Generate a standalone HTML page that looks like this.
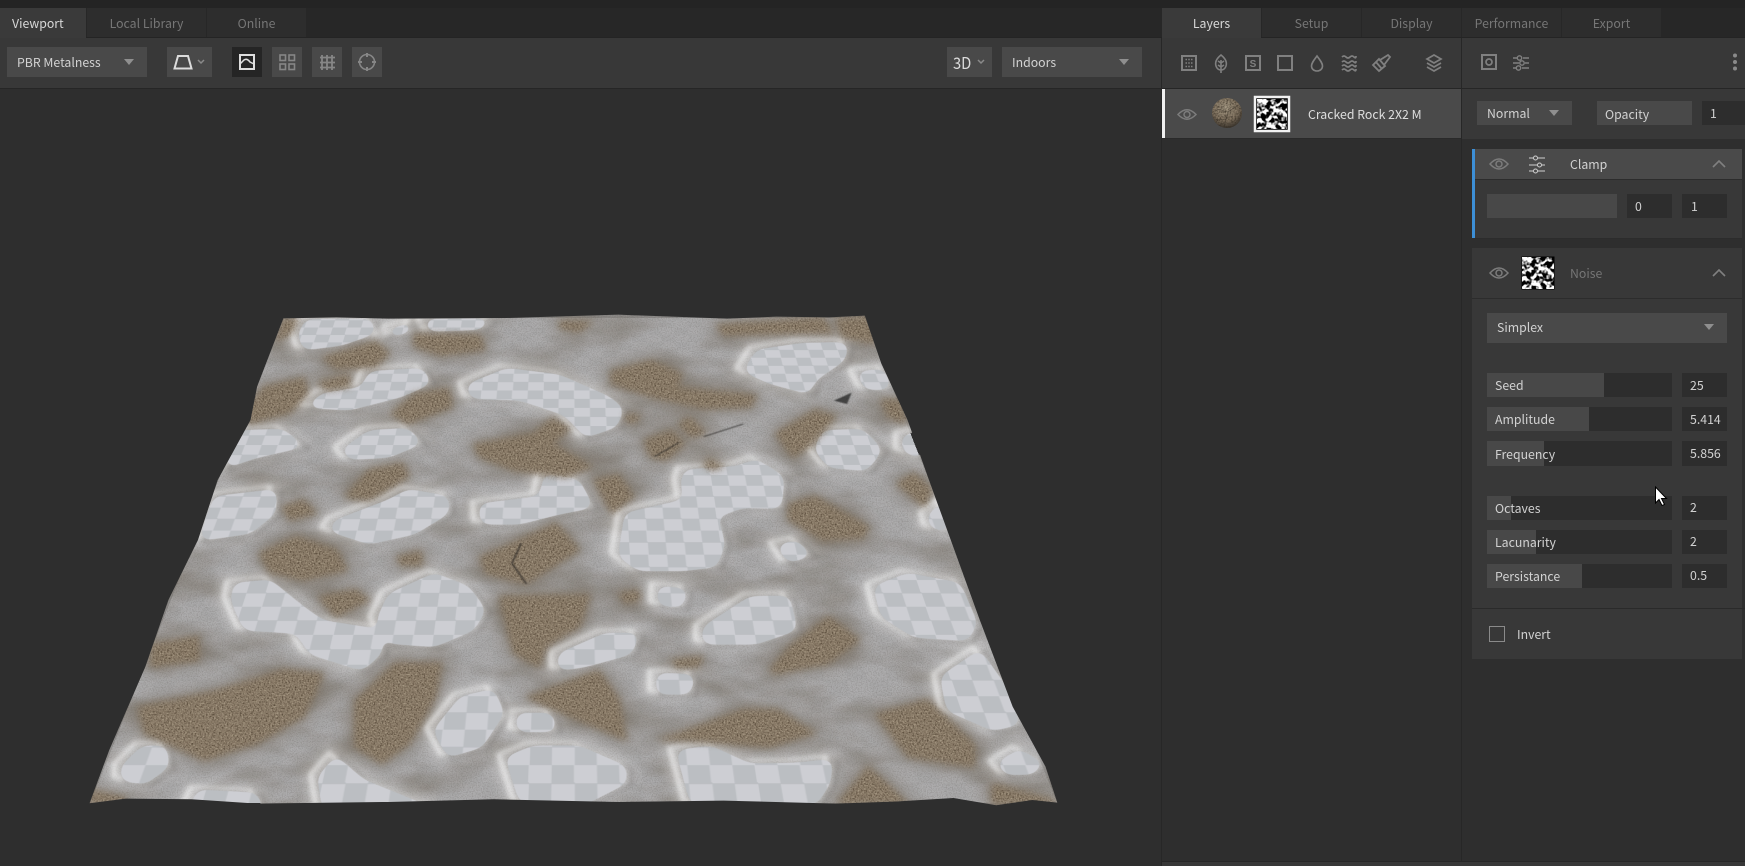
<!DOCTYPE html>
<html><head><meta charset="utf-8"><style>
html,body{margin:0;padding:0;background:#2e2e2e}
#r{position:relative;width:1745px;height:866px;overflow:hidden;background:#2e2e2e;font-family:"Noto Sans CJK JP","Liberation Sans",sans-serif;font-size:12.3px;color:#d2d2d2}
.a{position:absolute}
.t{position:absolute;white-space:nowrap;line-height:16px;height:16px}
.tab{position:absolute;top:8px;height:29px;line-height:30px;text-align:center;background:#2d2d2d;color:#767676}
.l{background:#494949}.d{background:#2d2d2d}.f{background:#484848}
svg{position:absolute;left:0;top:0}
#ch{position:absolute;left:0;top:0;width:967px;height:806px;transform-origin:0 0;transform:matrix3d(1,0,0,0,-0.4711,0.3406,0,-0.000821,0,0,1,0,470.07,528.6,0,1.662);background:repeating-conic-gradient(#cdced3 0 25%,#bbbec2 0 50%) 41.5px 26px/46.6px 39px}
</style></head><body><div id="r">
<div class="a" style="left:0;top:0;width:1745px;height:38px;background:#272727"></div>
<div class="a" style="left:0;top:0;width:1745px;height:8px;background:#242424"></div>
<div class="a" style="left:0;top:38px;width:1745px;height:50px;background:#383838"></div>
<div class="a" style="left:0;top:88px;width:1745px;height:1px;background:#262626"></div>
<div class="a" style="left:0;top:37px;width:1745px;height:1px;background:#242424"></div>

<div id="ch"></div>
<svg width="1745" height="866" viewBox="0 0 1745 866">
<defs>
<filter id="sm" filterUnits="userSpaceOnUse" x="0" y="0" width="1745" height="866" color-interpolation-filters="sRGB"><feGaussianBlur stdDeviation="4.500"/><feComponentTransfer><feFuncA type="linear" slope="9" intercept="-3.7"/></feComponentTransfer><feGaussianBlur stdDeviation="3.500"/><feComponentTransfer><feFuncA type="linear" slope="9" intercept="-3.8"/></feComponentTransfer></filter>
<filter id="bl2" filterUnits="userSpaceOnUse" x="0" y="0" width="1745" height="866" color-interpolation-filters="sRGB"><feGaussianBlur stdDeviation="2.500"/></filter>
<filter id="bl3" filterUnits="userSpaceOnUse" x="0" y="0" width="1745" height="866" color-interpolation-filters="sRGB"><feGaussianBlur stdDeviation="7"/></filter>
<filter id="bl9" filterUnits="userSpaceOnUse" x="0" y="0" width="1745" height="866" color-interpolation-filters="sRGB"><feGaussianBlur stdDeviation="9"/></filter>
<filter id="bl1" filterUnits="userSpaceOnUse" x="0" y="0" width="1745" height="866" color-interpolation-filters="sRGB"><feGaussianBlur stdDeviation="1.200"/></filter>
<filter id="snow" filterUnits="userSpaceOnUse" x="0" y="280" width="1160" height="560" color-interpolation-filters="sRGB">
<feTurbulence type="fractalNoise" baseFrequency=".8" numOctaves="2" seed="5"/><feColorMatrix type="matrix" values="0 0 0 0 .35 0 0 0 0 .33 0 0 0 0 .31 .8 0 0 0 -.32"/><feComposite in2="SourceAlpha" operator="in" result="g"/>
<feTurbulence type="fractalNoise" baseFrequency=".014 .03" numOctaves="3" seed="11"/><feColorMatrix type="matrix" values="0 0 0 0 .48 0 0 0 0 .45 0 0 0 0 .41 1.600 0 0 0 -.66"/><feComposite in2="SourceAlpha" operator="in" result="m"/>
<feMerge><feMergeNode in="SourceGraphic"/><feMergeNode in="m"/><feMergeNode in="g"/></feMerge></filter>
<filter id="rock" filterUnits="userSpaceOnUse" x="0" y="280" width="1160" height="560" color-interpolation-filters="sRGB">
<feGaussianBlur in="SourceGraphic" stdDeviation="3.500" result="b"/>
<feTurbulence type="fractalNoise" baseFrequency=".62" numOctaves="3" seed="3" result="n"/>
<feColorMatrix in="n" type="matrix" values="0 0 0 0 .28 0 0 0 0 .23 0 0 0 0 .17 2 0 0 0 -.88" result="dk"/><feComposite in="dk" in2="b" operator="in" result="dk2"/>
<feColorMatrix in="n" type="matrix" values="0 0 0 0 .74 0 0 0 0 .69 0 0 0 0 .6 0 1.800 0 0 -.85" result="lt"/><feComposite in="lt" in2="b" operator="in" result="lt2"/>
<feMerge><feMergeNode in="b"/><feMergeNode in="dk2"/><feMergeNode in="lt2"/></feMerge></filter>
<filter id="nz" x="0" y="0" width="100%" height="100%" color-interpolation-filters="sRGB"><feTurbulence type="fractalNoise" baseFrequency=".2" numOctaves="2" seed="8"/><feColorMatrix type="matrix" values="6 0 0 0 -2.500 6 0 0 0 -2.500 6 0 0 0 -2.500 0 0 0 0 1"/></filter>
<filter id="spn" x="0" y="0" width="100%" height="100%" color-interpolation-filters="sRGB"><feTurbulence type="fractalNoise" baseFrequency=".6" numOctaves="2" seed="4"/><feColorMatrix type="matrix" values="0 0 0 0 .2 0 0 0 0 .17 0 0 0 0 .13 1.800 0 0 0 -.7"/></filter>
<radialGradient id="sp" cx=".45" cy=".32" r=".72"><stop offset="0" stop-color="#a59984"/><stop offset=".6" stop-color="#80725f"/><stop offset="1" stop-color="#2f2a24"/></radialGradient>
<clipPath id="spc"><circle cx="1227" cy="113" r="15"/></clipPath>
<g id="b" transform="translate(60,300) scale(.657,.3333)">
<polygon points="375,58 475,58 480,100 430,135 370,150 362,100"/>
<polygon points="490,115 505,85 540,65 532,98"/>
<polygon points="555,58 660,56 640,88 560,94"/>
<polygon points="1060,150 1130,130 1200,128 1195,180 1150,240 1140,282 1080,250 1040,215"/>
<polygon points="1212,215 1255,208 1265,268 1225,268"/>
<polygon points="470,215 552,205 566,250 520,290 440,330 372,322 400,280 460,262"/>
<polygon points="618,255 680,205 760,225 835,290 858,325 848,380 800,412 768,345 700,300 625,295"/>
<polygon points="272,392 340,388 372,440 300,472 250,505 262,430"/>
<polygon points="470,392 530,385 552,430 500,472 440,478 428,450"/>
<polygon points="1160,392 1222,388 1252,450 1228,512 1170,502 1148,450"/>
<polygon points="1282,405 1318,392 1312,475 1282,455"/>
<polygon points="950,510 1030,500 1060,478 1102,530 1098,625 1040,622 1000,650 1012,730 1000,800 950,812 880,812 850,770 860,640 950,600 945,545"/>
<polygon points="235,590 330,568 328,640 290,700 212,722 225,640"/>
<polygon points="418,662 500,600 530,568 592,590 592,640 540,702 470,732 408,692"/>
<polygon points="638,612 730,590 738,520 790,540 812,622 760,642 700,672 640,672"/>
<polygon points="1320,645 1345,605 1355,695 1325,685"/>
<polygon points="1090,735 1122,722 1145,768 1108,788"/>
<polygon points="265,850 320,840 370,920 400,962 490,990 490,1060 460,1112 380,1062 360,1000 280,990 260,900"/>
<polygon points="500,882 570,820 622,860 648,930 630,990 570,1040 500,1030 482,960"/>
<polygon points="1238,860 1290,820 1370,850 1396,970 1382,1022 1300,1012 1250,950"/>
<polygon points="978,982 1050,890 1110,888 1122,990 1060,1032 978,1032"/>
<polygon points="758,1062 830,1000 882,1000 870,1062 800,1100 758,1112"/>
<polygon points="1340,1130 1400,1050 1440,1160 1462,1272 1420,1292 1350,1232"/>
<polygon points="910,858 955,868 948,922 910,916"/>
<polygon points="908,1120 966,1124 960,1182 908,1182"/>
<polygon points="568,1292 610,1190 660,1168 676,1240 642,1342 590,1372"/>
<polygon points="93,1400 125,1338 162,1338 166,1400 130,1452 93,1442"/>
<polygon points="678,1372 720,1338 790,1338 862,1400 862,1450 800,1512 700,1508"/>
<polygon points="938,1352 990,1338 1050,1392 1120,1390 1176,1378 1172,1450 1152,1512 960,1512"/>
<polygon points="392,1432 420,1368 462,1440 575,1530 400,1530"/>
<polygon points="695,1240 750,1240 755,1295 695,1295"/>
<polygon points="1425,1390 1460,1348 1497,1390 1482,1422 1440,1424"/>
<polygon points="195,1530 210,1470 300,1480 310,1530"/>
</g>
<g id="st" transform="translate(60,300) scale(.657,.3333)">
<polygon points="538,100 640,105 648,150 580,167 538,140"/>
<polygon points="398,172 480,123 502,160 480,202 420,207"/>
<polygon points="760,62 812,65 790,96 760,86"/>
<polygon points="998,75 1160,52 1178,100 1110,100 1010,106"/>
<polygon points="1180,55 1232,48 1242,132 1190,112"/>
<polygon points="838,212 900,180 948,222 940,262 1062,285 1052,322 980,327 900,292 838,252"/>
<polygon points="286,320 310,260 372,232 378,280 350,340 286,372"/>
<polygon points="392,245 440,224 442,260 405,272"/>
<polygon points="502,342 540,280 592,264 598,322 530,372"/>
<polygon points="338,55 364,55 352,100 328,128"/>
<polygon points="628,432 720,400 750,352 778,385 750,430 812,500 770,532 690,512 638,472"/>
<polygon points="888,420 930,390 952,430 922,482 898,472"/>
<polygon points="1088,400 1150,328 1182,350 1142,440 1115,472"/>
<polygon points="1248,298 1282,298 1288,372 1260,352"/>
<polygon points="432,592 470,508 522,488 532,530 470,602"/>
<polygon points="336,622 370,598 392,640 350,662"/>
<polygon points="812,540 850,522 874,590 840,642"/>
<polygon points="1272,550 1300,518 1328,570 1316,622"/>
<polygon points="1108,610 1150,588 1232,680 1222,717 1160,722 1108,660"/>
<polygon points="302,760 360,708 422,750 438,812 370,842 318,817"/>
<polygon points="638,772 720,700 755,668 792,750 710,852 648,822"/>
<polygon points="512,770 550,752 552,797 518,797"/>
<polygon points="668,888 808,882 792,980 740,1040 730,1102 690,1062"/>
<polygon points="392,890 450,868 472,900 420,952"/>
<polygon points="1078,1112 1110,1040 1170,948 1218,1020 1170,1092 1090,1122"/>
<polygon points="848,880 882,868 882,902 860,912"/>
<polygon points="138,1032 212,1008 212,1082 138,1102"/>
<polygon points="118,1222 240,1170 340,1108 402,1120 372,1250 300,1332 220,1382 128,1302"/>
<polygon points="448,1202 510,1088 582,1088 572,1190 532,1332 490,1392 448,1342"/>
<polygon points="708,1192 820,1110 852,1200 862,1322 790,1262"/>
<polygon points="1240,1242 1320,1198 1392,1332 1392,1402 1290,1372"/>
<polygon points="908,1322 1040,1228 1092,1228 1152,1300 1080,1342 950,1322"/>
<polygon points="1182,1512 1230,1398 1292,1512"/>
<polygon points="48,1470 100,1492 100,1512 44,1512"/>
<polygon points="1418,1450 1512,1498 1518,1512 1418,1512"/>
<polygon points="928,1080 980,1068 972,1102 940,1105"/>
<polygon points="958,350 985,400 960,412 940,370"/>
<polygon points="988,475 1012,500 992,512 978,495"/>
<polygon points="860,340 885,345 875,370 860,365"/>
</g>
<mask id="hm" maskUnits="userSpaceOnUse" x="0" y="0" width="1745" height="866"><rect width="1745" height="866" fill="#fff"/><use href="#b" fill="#000" filter="url(#sm)"/></mask>
</defs>

<g mask="url(#hm)">
<rect x="70" y="300" width="1010" height="515" fill="#a6a5a5" fill-opacity=".82" filter="url(#snow)"/>
<use href="#st" fill="#6e6252" stroke="#6e6252" stroke-width="18" opacity=".55" filter="url(#bl9)"/>
<use href="#b" fill="none" stroke="#fff" stroke-width="24" transform="translate(-4,-2)" opacity=".42" filter="url(#bl3)"/>
<use href="#b" fill="none" stroke="#fff" stroke-width="7" transform="translate(-7,-3)" opacity=".6" filter="url(#bl2)"/>
<use href="#b" fill="none" stroke="#55514e" stroke-width="8" transform="translate(5,2)" opacity=".25" filter="url(#bl2)"/>
</g>
<use href="#st" fill="#8a7b68" filter="url(#rock)"/>
<g transform="translate(60,300) scale(.657,.3333)" filter="url(#bl1)" opacity=".7">
<polygon points="1252,1242 1318,1198 1348,1240 1288,1335 1270,1300" fill="#2f2d2b"/>
<polygon points="1178,302 1205,278 1198,312" fill="#181818"/>
<g fill="none" stroke="#1f1d1b" stroke-width="2.500">
<path d="M980 410L1040 372"/><path d="M702 730L688 790 710 852"/><path d="M420 952L455 920"/>
<path d="M220 1202L252 1168"/><path d="M905 470L942 428"/><path d="M1016 1245L1055 1202"/><path d="M528 1095L580 1095"/><path d="M1078 1120L1085 1080"/>
<path d="M678 1058L740 1058"/><path d="M850 1305L760 1235"/>
</g>
<path d="M870 1335Q960 1290 1040 1232" fill="none" stroke="#57524c" stroke-width="3"/>
<path d="M1422 1512L1432 1450 1450 1500Z" fill="#1c1b1a"/>
</g>
<path fill="#2e2e2e" fill-rule="evenodd" transform="translate(60,300) scale(.657,.3333)" d="M-90 -60H1670V1640H-90ZM340 55L420 52 500 56 680 54 850 44 1015 56 1090 50 1170 52 1225 47 1250 190 1290 360 1330 580 1400 960 1450 1220 1500 1400 1518 1508 1480 1500 1425 1516 1360 1494 1270 1505 1180 1511 1010 1502 850 1506 660 1498 500 1506 300 1511 200 1498 100 1496 45 1510 75 1350 130 1100 165 900 210 720 240 540 290 360 300 260Z"/>
</svg>

<!-- tabs -->
<div class="tab" style="left:0;width:86px;background:#3a3a3a;color:#d8d8d8;height:30px;text-align:left;text-indent:12px">Viewport</div>
<div class="tab" style="left:87px;width:119px">Local Library</div>
<div class="tab" style="left:207px;width:99px">Online</div>
<div class="a" style="left:1162px;top:38px;width:583px;height:50px;background:#383838"></div>
<div class="tab" style="left:1162px;width:99px;background:#3a3a3a;color:#d8d8d8;height:30px">Layers</div>
<div class="tab" style="left:1262px;width:99px">Setup</div>
<div class="tab" style="left:1362px;width:99px;">Display</div>
<div class="tab" style="left:1462px;width:99px">Performance</div>
<div class="tab" style="left:1562px;width:99px">Export</div>

<!-- viewport toolbar -->
<div class="a l" style="left:7px;top:47px;width:140px;height:30px"></div>
<div class="t" style="left:17px;top:54px">PBR Metalness</div>
<div class="a l" style="left:167px;top:47px;width:45px;height:30px"></div>
<div class="a" style="left:232px;top:47px;width:30px;height:30px;background:#252525"></div>
<div class="a l" style="left:272px;top:47px;width:30px;height:30px"></div>
<div class="a l" style="left:312px;top:47px;width:30px;height:30px"></div>
<div class="a l" style="left:352px;top:47px;width:30px;height:30px"></div>
<div class="a l" style="left:947px;top:47px;width:45px;height:30px"></div>
<div class="t" style="left:953px;top:53px;font-size:16px;line-height:18px;height:18px;color:#dcdcdc;transform:scaleX(.92);transform-origin:0 0">3D</div>
<div class="a l" style="left:1002px;top:47px;width:140px;height:30px"></div>
<div class="t" style="left:1012px;top:54px">Indoors</div>

<!-- columns -->
<div class="a" style="left:1161px;top:38px;width:1px;height:828px;background:#272727"></div>
<div class="a" style="left:1461px;top:38px;width:1px;height:828px;background:#272727"></div>
<div class="a" style="left:1162px;top:88px;width:583px;height:1px;background:#262626"></div>
<div class="a" style="left:1162px;top:862px;width:583px;height:4px;background:#383838"></div>
<div class="a" style="left:1162px;top:861px;width:583px;height:1px;background:#272727"></div>

<!-- layer row -->
<div class="a" style="left:1162px;top:89px;width:299px;height:49px;background:#4a4a4a"></div>
<div class="a" style="left:1162px;top:89px;width:3px;height:49px;background:#f0f0f0"></div>
<div class="a" style="left:1162px;top:138px;width:299px;height:1px;background:#2a2a2a"></div>
<div class="t" style="left:1308px;top:106px;color:#dedede">Cracked Rock 2X2 M</div>

<!-- right panel -->
<div class="a" style="left:1462px;top:89px;width:283px;height:50px;background:#383838"></div>
<div class="a l" style="left:1477px;top:101px;width:95px;height:24px"></div>
<div class="t" style="left:1487px;top:105px">Normal</div>
<div class="a l" style="left:1597px;top:101px;width:95px;height:24px"></div>
<div class="t" style="left:1605px;top:106px">Opacity</div>
<div class="a d" style="left:1702px;top:101px;width:43px;height:24px"></div>
<div class="t" style="left:1710px;top:105px">1</div>

<!-- clamp -->
<div class="a" style="left:1472px;top:149px;width:270px;height:89px;background:#383838"></div>
<div class="a" style="left:1475px;top:149px;width:267px;height:30px;background:#4a4a4a"></div>
<div class="a" style="left:1475px;top:179px;width:267px;height:1px;background:#2c2c2c"></div>
<div class="a" style="left:1475px;top:238px;width:267px;height:1px;background:#2c2c2c"></div>
<div class="a" style="left:1472px;top:149px;width:3px;height:89px;background:#3d8fd6"></div>
<div class="t" style="left:1570px;top:156px">Clamp</div>
<div class="a f" style="left:1487px;top:194px;width:130px;height:24px"></div>
<div class="a d" style="left:1627px;top:194px;width:45px;height:24px"></div>
<div class="t" style="left:1635px;top:198px">0</div>
<div class="a d" style="left:1682px;top:194px;width:45px;height:24px"></div>
<div class="t" style="left:1691px;top:198px">1</div>

<!-- noise -->
<div class="a" style="left:1472px;top:248px;width:270px;height:411px;background:#383838"></div>
<div class="a" style="left:1472px;top:298px;width:270px;height:1px;background:#2c2c2c"></div>
<div class="t" style="left:1570px;top:265px;color:#757575">Noise</div>
<div class="a l" style="left:1487px;top:313px;width:240px;height:30px"></div>
<div class="t" style="left:1497px;top:319px">Simplex</div>

<div class="a d" style="left:1487px;top:373px;width:185px;height:24px"></div><div class="a f" style="left:1487px;top:373px;width:117px;height:24px"></div>
<div class="t" style="left:1495px;top:377px">Seed</div>
<div class="a d" style="left:1682px;top:373px;width:45px;height:24px"></div><div class="t" style="left:1690px;top:377px">25</div>

<div class="a d" style="left:1487px;top:407px;width:185px;height:24px"></div><div class="a f" style="left:1487px;top:407px;width:102px;height:24px"></div>
<div class="t" style="left:1495px;top:411px">Amplitude</div>
<div class="a d" style="left:1682px;top:407px;width:45px;height:24px"></div><div class="t" style="left:1690px;top:411px">5.414</div>

<div class="a d" style="left:1487px;top:441px;width:185px;height:25px"></div><div class="a f" style="left:1487px;top:441px;width:57px;height:25px"></div>
<div class="t" style="left:1495px;top:446px">Frequency</div>
<div class="a d" style="left:1682px;top:441px;width:45px;height:25px"></div><div class="t" style="left:1690px;top:445px">5.856</div>

<div class="a d" style="left:1487px;top:496px;width:185px;height:24px"></div><div class="a f" style="left:1487px;top:496px;width:24px;height:24px"></div>
<div class="t" style="left:1495px;top:500px">Octaves</div>
<div class="a d" style="left:1682px;top:496px;width:45px;height:24px"></div><div class="t" style="left:1690px;top:499px">2</div>

<div class="a d" style="left:1487px;top:530px;width:185px;height:24px"></div><div class="a f" style="left:1487px;top:530px;width:49px;height:24px"></div>
<div class="t" style="left:1495px;top:534px">Lacunarity</div>
<div class="a d" style="left:1682px;top:530px;width:45px;height:24px"></div><div class="t" style="left:1690px;top:533px">2</div>

<div class="a d" style="left:1487px;top:564px;width:185px;height:24px"></div><div class="a f" style="left:1487px;top:564px;width:95px;height:24px"></div>
<div class="t" style="left:1495px;top:568px">Persistance</div>
<div class="a d" style="left:1682px;top:564px;width:45px;height:24px"></div><div class="t" style="left:1690px;top:567px">0.5</div>

<div class="a" style="left:1472px;top:608px;width:273px;height:1px;background:#2a2a2a"></div>
<div class="a" style="left:1489px;top:626px;width:14px;height:14px;border:1px solid #8a8a8a"></div>
<div class="t" style="left:1517px;top:626px">Invert</div>

<!-- icons -->
<svg width="1745" height="866" viewBox="0 0 1745 866" fill="none">
<g fill="#8f8f8f" stroke="none">
<path d="M124 59H134L129 65Z"/><path d="M1119 59H1129L1124 65Z"/><path d="M1549 110H1559L1554 116Z"/><path d="M1704 324H1714L1709 330Z"/>
</g>
<path d="M174.500 68.500L178 56H188L191.500 68.500Z" stroke="#dcdcdc" stroke-width="2"/>
<path d="M198 60L201 63 204 60" stroke="#8a8a8a" stroke-width="1.500"/>
<path d="M978 60L981 63 984 60" stroke="#8a8a8a" stroke-width="1.500"/>
<rect x="240" y="55" width="14" height="14" stroke="#dedede" stroke-width="2"/>
<path d="M240 64L244 60Q247 58 250 62L254 64" stroke="#dedede" stroke-width="1.500"/>
<g stroke="#868686" stroke-width="1.600">
<rect x="280" y="55" width="5.500" height="5.500"/><rect x="289" y="55" width="5.500" height="5.500"/><rect x="280" y="64" width="5.500" height="5.500"/><rect x="289" y="64" width="5.500" height="5.500"/>
<path d="M322 55V70M327 55V70M332 55V70M320 57.500H335M320 62.500H335M320 67.500H335" stroke-width="1.800"/>
<circle cx="367" cy="62" r="7.500"/><path d="M367 53V57M367 67V71M358 62H362M372 62H376" stroke-width="2"/>
</g>
<g stroke="#808080" stroke-width="2">
<rect x="1182" y="56" width="14" height="14"/><path d="M1185.500 59.500h7M1185.500 63h7M1185.500 66.500h7" stroke-dasharray="1.500 1.250" stroke-width="1.500"/>
<path d="M1221 55C1226 59 1227 63 1226 66 1225 69 1223 70 1221 70 1219 70 1217 69 1216 66 1215 63 1216 59 1221 55ZM1221 60V73M1221 63L1224 61M1221 63L1218 61M1221 67L1224 65M1221 67L1218 65" stroke-width="1.600"/>
<rect x="1246" y="56" width="14" height="14"/>
<rect x="1278" y="56" width="14" height="14"/>
<path d="M1317 56C1320 60 1322.500 63 1322.500 66 1322.500 69 1320 71 1317 71 1314 71 1311.500 69 1311.500 66 1311.500 63 1314 60 1317 56Z" stroke-width="1.600"/>
<path d="M1342 57Q1344 55 1346 57T1350 57 1354 57 1356 56M1342 62Q1344 60 1346 62T1350 62 1354 62 1356 61M1342 66Q1344 64 1346 66T1350 66 1354 66 1356 65M1342 70Q1344 68 1346 70T1350 70 1354 70 1356 69" stroke-width="1.700"/>
<path d="M1373 65L1379 59 1385 66 1379 71ZM1380 60L1388 55 1390 57 1384 65M1376 62L1382 69" stroke-width="1.800"/>
<path d="M1434 55L1441 59 1434 63 1427 59ZM1427 63L1434 67 1441 63M1427 67L1434 71 1441 67" stroke-width="1.700"/>
<rect x="1482" y="55" width="14" height="14"/><circle cx="1489" cy="62" r="3" stroke-width="1.700"/>
<path d="M1513 58H1517M1523 58H1529M1513 63H1519M1525 63H1529M1513 68H1516M1522 68H1529" stroke-width="1.500"/>
<circle cx="1519.500" cy="58" r="2.200" stroke-width="1.400"/><circle cx="1522" cy="63" r="2.200" stroke-width="1.400"/><circle cx="1518.500" cy="68" r="2.200" stroke-width="1.400"/>
</g>
<text x="1253" y="67" fill="#808080" font-family="Liberation Sans" font-weight="700" font-size="10" text-anchor="middle">S</text>
<g fill="#8a8a8a"><circle cx="1735" cy="55.500" r="2"/><circle cx="1735" cy="62" r="2"/><circle cx="1735" cy="68.500" r="2"/></g>
<g stroke="#7c7c7c" stroke-width="1.500">
<path d="M1178 114.500Q1187 105 1196 114.500Q1187 124 1178 114.500Z"/><circle cx="1187" cy="114.500" r="3"/>
<path d="M1490 164Q1499 154 1508 164Q1499 174 1490 164Z"/><circle cx="1499" cy="164" r="3"/>
<path d="M1490 273Q1499 263 1508 273Q1499 283 1490 273Z"/><circle cx="1499" cy="273" r="3"/>
</g>
<g stroke="#d0d0d0" stroke-width="1">
<path d="M1529 158H1533M1538 158H1545M1529 165H1537M1542 165H1545M1529 171H1533M1538 171H1545"/>
<circle cx="1535.500" cy="158" r="2"/><circle cx="1539.500" cy="165" r="2"/><circle cx="1535.500" cy="171" r="2"/>
</g>
<path d="M1713 167L1719 161 1725 167" stroke="#808080" stroke-width="1.600"/>
<path d="M1713 276L1719 270 1725 276" stroke="#808080" stroke-width="1.600"/>
<circle cx="1227" cy="113" r="15" fill="url(#sp)"/>
<g clip-path="url(#spc)"><rect x="1212" y="98" width="30" height="30" filter="url(#spn)"/></g>
<g clip-path="url(#spc)" stroke="#2e2720" stroke-width=".7" opacity=".5" fill="none"><path d="M1217 109L1228 112 1238 105M1228 112L1224 127M1214 120L1226 119"/></g>
<rect x="1255" y="97" width="34" height="34" fill="#000" stroke="#f2f2f2" stroke-width="2.500"/>
<svg x="1257" y="99" width="30" height="30"><rect width="30" height="30" filter="url(#nz)"/></svg>
<rect x="1521.500" y="256.500" width="33" height="33" fill="#000"/>
<svg x="1522" y="257" width="32" height="32"><rect width="32" height="32" filter="url(#nz)"/></svg>
<path d="M1655.500 487V503L1659 499.500 1662 505.500 1664.500 504.500 1661.500 498.500H1666.500Z" fill="#fff" stroke="#000" stroke-width="1"/>
</svg>
</div></body></html>
